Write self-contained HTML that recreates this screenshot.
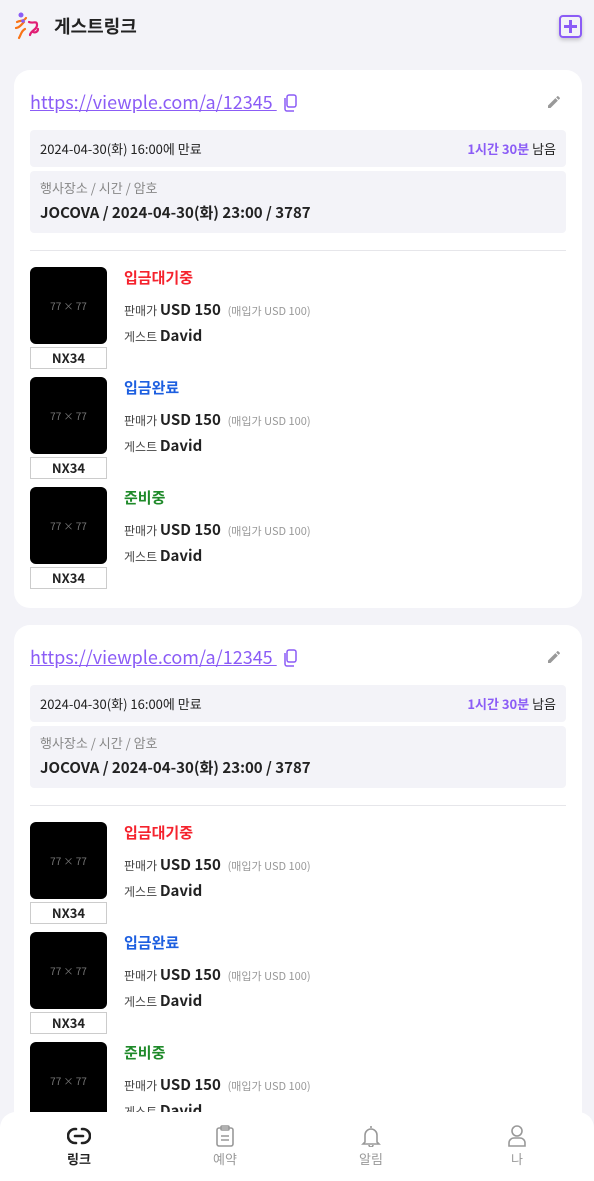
<!DOCTYPE html><html style="width:594px;height:1181px;overflow:hidden"><head><meta charset="utf-8"><style>
*{box-sizing:border-box;margin:0;padding:0}
body{width:594px;height:1181px;overflow:hidden;background:#f3f3f8;font-family:"Noto Sans CJK KR","Liberation Sans",sans-serif;color:#222;position:relative}
.hdr{height:54px;position:relative}
.hdr .t{position:absolute;left:54px;top:13px;font-size:18px;font-weight:bold;line-height:26px}
.plus{position:absolute;left:559px;top:15px;width:23px;height:23px;border:2.5px solid #8b5cf6;border-radius:4px;box-shadow:0 2px 4px rgba(0,0,0,.2)}
.plus:before,.plus:after{content:"";position:absolute;background:#8b5cf6}
.plus:before{left:3px;right:3px;top:8px;height:2.5px}.plus:after{top:3px;bottom:3px;left:8px;width:2.5px}
.card{position:absolute;left:14px;width:568px;background:#fff;border-radius:16px;padding:0 16px;overflow:hidden}
.url{position:absolute;left:16px;top:19px;font-size:18px;line-height:26px;color:#8b5cf6;text-decoration:underline}
.pen{position:absolute;right:20px;top:24px}
.exp{position:absolute;left:16px;right:16px;top:60px;height:37px;background:#f3f3f8;border-radius:4px;font-size:13px;line-height:17px;padding:10px 10px;display:flex;justify-content:space-between}
.exp b{color:#8b5cf6;font-weight:bold}
.inf{position:absolute;left:16px;right:16px;top:101px;height:62px;background:#f3f3f8;border-radius:4px;padding:8px 10px}
.inf .a{font-size:13px;color:#888;line-height:18px}.inf .b{font-size:15px;font-weight:bold;margin-top:6px;line-height:20px}
.hr{position:absolute;left:16px;right:16px;top:180px;height:1px;background:#e6e6ea}
.it{position:absolute;left:16px;width:540px;height:104px}
.img{position:absolute;left:0;top:0;width:77px;height:77px;background:#000;border-radius:6px;color:#777;font-size:10px;text-align:center;line-height:77px}
.nx{position:absolute;left:0;top:80px;width:77px;height:22px;border:1px solid #ccc;font-size:13px;font-weight:bold;text-align:center;line-height:20px}
.st{position:absolute;left:94px;top:0;font-size:15px;font-weight:bold;line-height:22px}
.pr{position:absolute;left:94px;top:33px;font-size:12px;color:#444;line-height:20px}
.pr b{font-size:15px;color:#222}.pr span{color:#999;font-size:11px;margin-left:4px}
.gu{position:absolute;left:94px;top:59px;font-size:12px;color:#444;line-height:20px}.gu b{font-size:15px;color:#222}
.nav{position:absolute;left:0;top:1112px;width:594px;height:69px;background:#fff;border-radius:16px 16px 0 0}
.tab{position:absolute;top:0;width:100px;text-align:center;font-size:13px;color:#999;line-height:18px}
.tab svg{display:block;margin:13px auto 3px}
</style></head><body>
<div class="hdr">
<svg style="position:absolute;left:14px;top:12px" width="26" height="28" viewBox="0 0 26 28"><circle cx="7" cy="3" r="2.5" fill="#8b5cf6"/><path d="M3 10c4-2 6 0 9-4M2 16c3 0 5-3 8-6M5 26c2-3 2-7 6-9" stroke="#f97316" stroke-width="2.2" fill="none" stroke-linecap="round"/><path d="M15 10c4 2 8-2 8 3s-6 5-7 10M19 20c2 1 5 0 5-3" stroke="#e11d74" stroke-width="2.2" fill="none" stroke-linecap="round"/><circle cx="9" cy="9" r="1.8" fill="#8b5cf6"/></svg>
<div class="t">게스트링크</div><div class="plus"></div></div>

<div class="card" style="top:70px;height:538px">
<div class="url">https://viewple.com/a/12345 <svg style="vertical-align:-3px;margin-left:6px" width="14" height="18" viewBox="0 0 14 18" fill="none" stroke="#8b5cf6" stroke-width="1.5"><rect x="4" y="1" width="9" height="12" rx="2"/><path d="M2 4v11a2 2 0 0 0 2 2h7"/></svg></div>
<svg class="pen" width="16" height="16" viewBox="0 0 24 24"><path fill="#999" d="M3 17.25V21h3.75L17.8 9.9l-3.7-3.7L3 17.25zM20.7 7c.4-.4.4-1 0-1.4l-2.3-2.3a1 1 0 0 0-1.4 0l-1.8 1.8 3.7 3.7L20.7 7z"/></svg>
<div class="exp"><span>2024-04-30(화) 16:00에 만료</span><span><b>1시간 30분</b> 남음</span></div>
<div class="inf"><div class="a">행사장소 / 시간 / 암호</div><div class="b">JOCOVA / 2024-04-30(화) 23:00 / 3787</div></div>
<div class="hr"></div>
<div class="it" style="top:197px"><div class="img">77 × 77</div><div class="nx">NX34</div><div class="st" style="color:#f5222d">입금대기중</div><div class="pr">판매가 <b>USD 150</b> <span>(매입가 USD 100)</span></div><div class="gu">게스트 <b>David</b></div></div>
<div class="it" style="top:307px"><div class="img">77 × 77</div><div class="nx">NX34</div><div class="st" style="color:#1d5fe0">입금완료</div><div class="pr">판매가 <b>USD 150</b> <span>(매입가 USD 100)</span></div><div class="gu">게스트 <b>David</b></div></div>
<div class="it" style="top:417px"><div class="img">77 × 77</div><div class="nx">NX34</div><div class="st" style="color:#1f8a2a">준비중</div><div class="pr">판매가 <b>USD 150</b> <span>(매입가 USD 100)</span></div><div class="gu">게스트 <b>David</b></div></div>
</div>

<div class="card" style="top:625px;height:556px;border-radius:16px 16px 0 0">
<div class="url">https://viewple.com/a/12345 <svg style="vertical-align:-3px;margin-left:6px" width="14" height="18" viewBox="0 0 14 18" fill="none" stroke="#8b5cf6" stroke-width="1.5"><rect x="4" y="1" width="9" height="12" rx="2"/><path d="M2 4v11a2 2 0 0 0 2 2h7"/></svg></div>
<svg class="pen" width="16" height="16" viewBox="0 0 24 24"><path fill="#999" d="M3 17.25V21h3.75L17.8 9.9l-3.7-3.7L3 17.25zM20.7 7c.4-.4.4-1 0-1.4l-2.3-2.3a1 1 0 0 0-1.4 0l-1.8 1.8 3.7 3.7L20.7 7z"/></svg>
<div class="exp"><span>2024-04-30(화) 16:00에 만료</span><span><b>1시간 30분</b> 남음</span></div>
<div class="inf"><div class="a">행사장소 / 시간 / 암호</div><div class="b">JOCOVA / 2024-04-30(화) 23:00 / 3787</div></div>
<div class="hr"></div>
<div class="it" style="top:197px"><div class="img">77 × 77</div><div class="nx">NX34</div><div class="st" style="color:#f5222d">입금대기중</div><div class="pr">판매가 <b>USD 150</b> <span>(매입가 USD 100)</span></div><div class="gu">게스트 <b>David</b></div></div>
<div class="it" style="top:307px"><div class="img">77 × 77</div><div class="nx">NX34</div><div class="st" style="color:#1d5fe0">입금완료</div><div class="pr">판매가 <b>USD 150</b> <span>(매입가 USD 100)</span></div><div class="gu">게스트 <b>David</b></div></div>
<div class="it" style="top:417px"><div class="img">77 × 77</div><div class="nx">NX34</div><div class="st" style="color:#1f8a2a">준비중</div><div class="pr">판매가 <b>USD 150</b> <span>(매입가 USD 100)</span></div><div class="gu">게스트 <b>David</b></div></div>
</div>

<div class="nav">
<div class="tab" style="left:29px;color:#222;font-weight:bold"><svg width="24" height="22" viewBox="0 0 24 22" fill="none" stroke="#222" stroke-width="2.6" stroke-linecap="round"><path d="M9 4H8a7 7 0 0 0 0 14h1M15 4h1a7 7 0 0 1 0 14h-1M8 11h8"/></svg>링크</div>
<div class="tab" style="left:175px"><svg width="20" height="22" viewBox="0 0 20 22" fill="none" stroke="#999" stroke-width="1.6"><rect x="2" y="3" width="16" height="18" rx="2"/><rect x="6" y="1" width="8" height="4" rx="1"/><path d="M6 11h8M6 15h8"/></svg>예약</div>
<div class="tab" style="left:321px"><svg width="20" height="22" viewBox="0 0 20 22" fill="none" stroke="#999" stroke-width="1.6"><path d="M10 1v2M4 17V10a6 6 0 0 1 12 0v7l2 2H2zM8 20a2 2 0 0 0 4 0"/></svg>알림</div>
<div class="tab" style="left:467px"><svg width="20" height="22" viewBox="0 0 20 22" fill="none" stroke="#999" stroke-width="1.6"><circle cx="10" cy="6" r="5"/><path d="M2 21v-3a5 5 0 0 1 5-5h6a5 5 0 0 1 5 5v3z"/></svg>나</div>
</div>
</body></html>
